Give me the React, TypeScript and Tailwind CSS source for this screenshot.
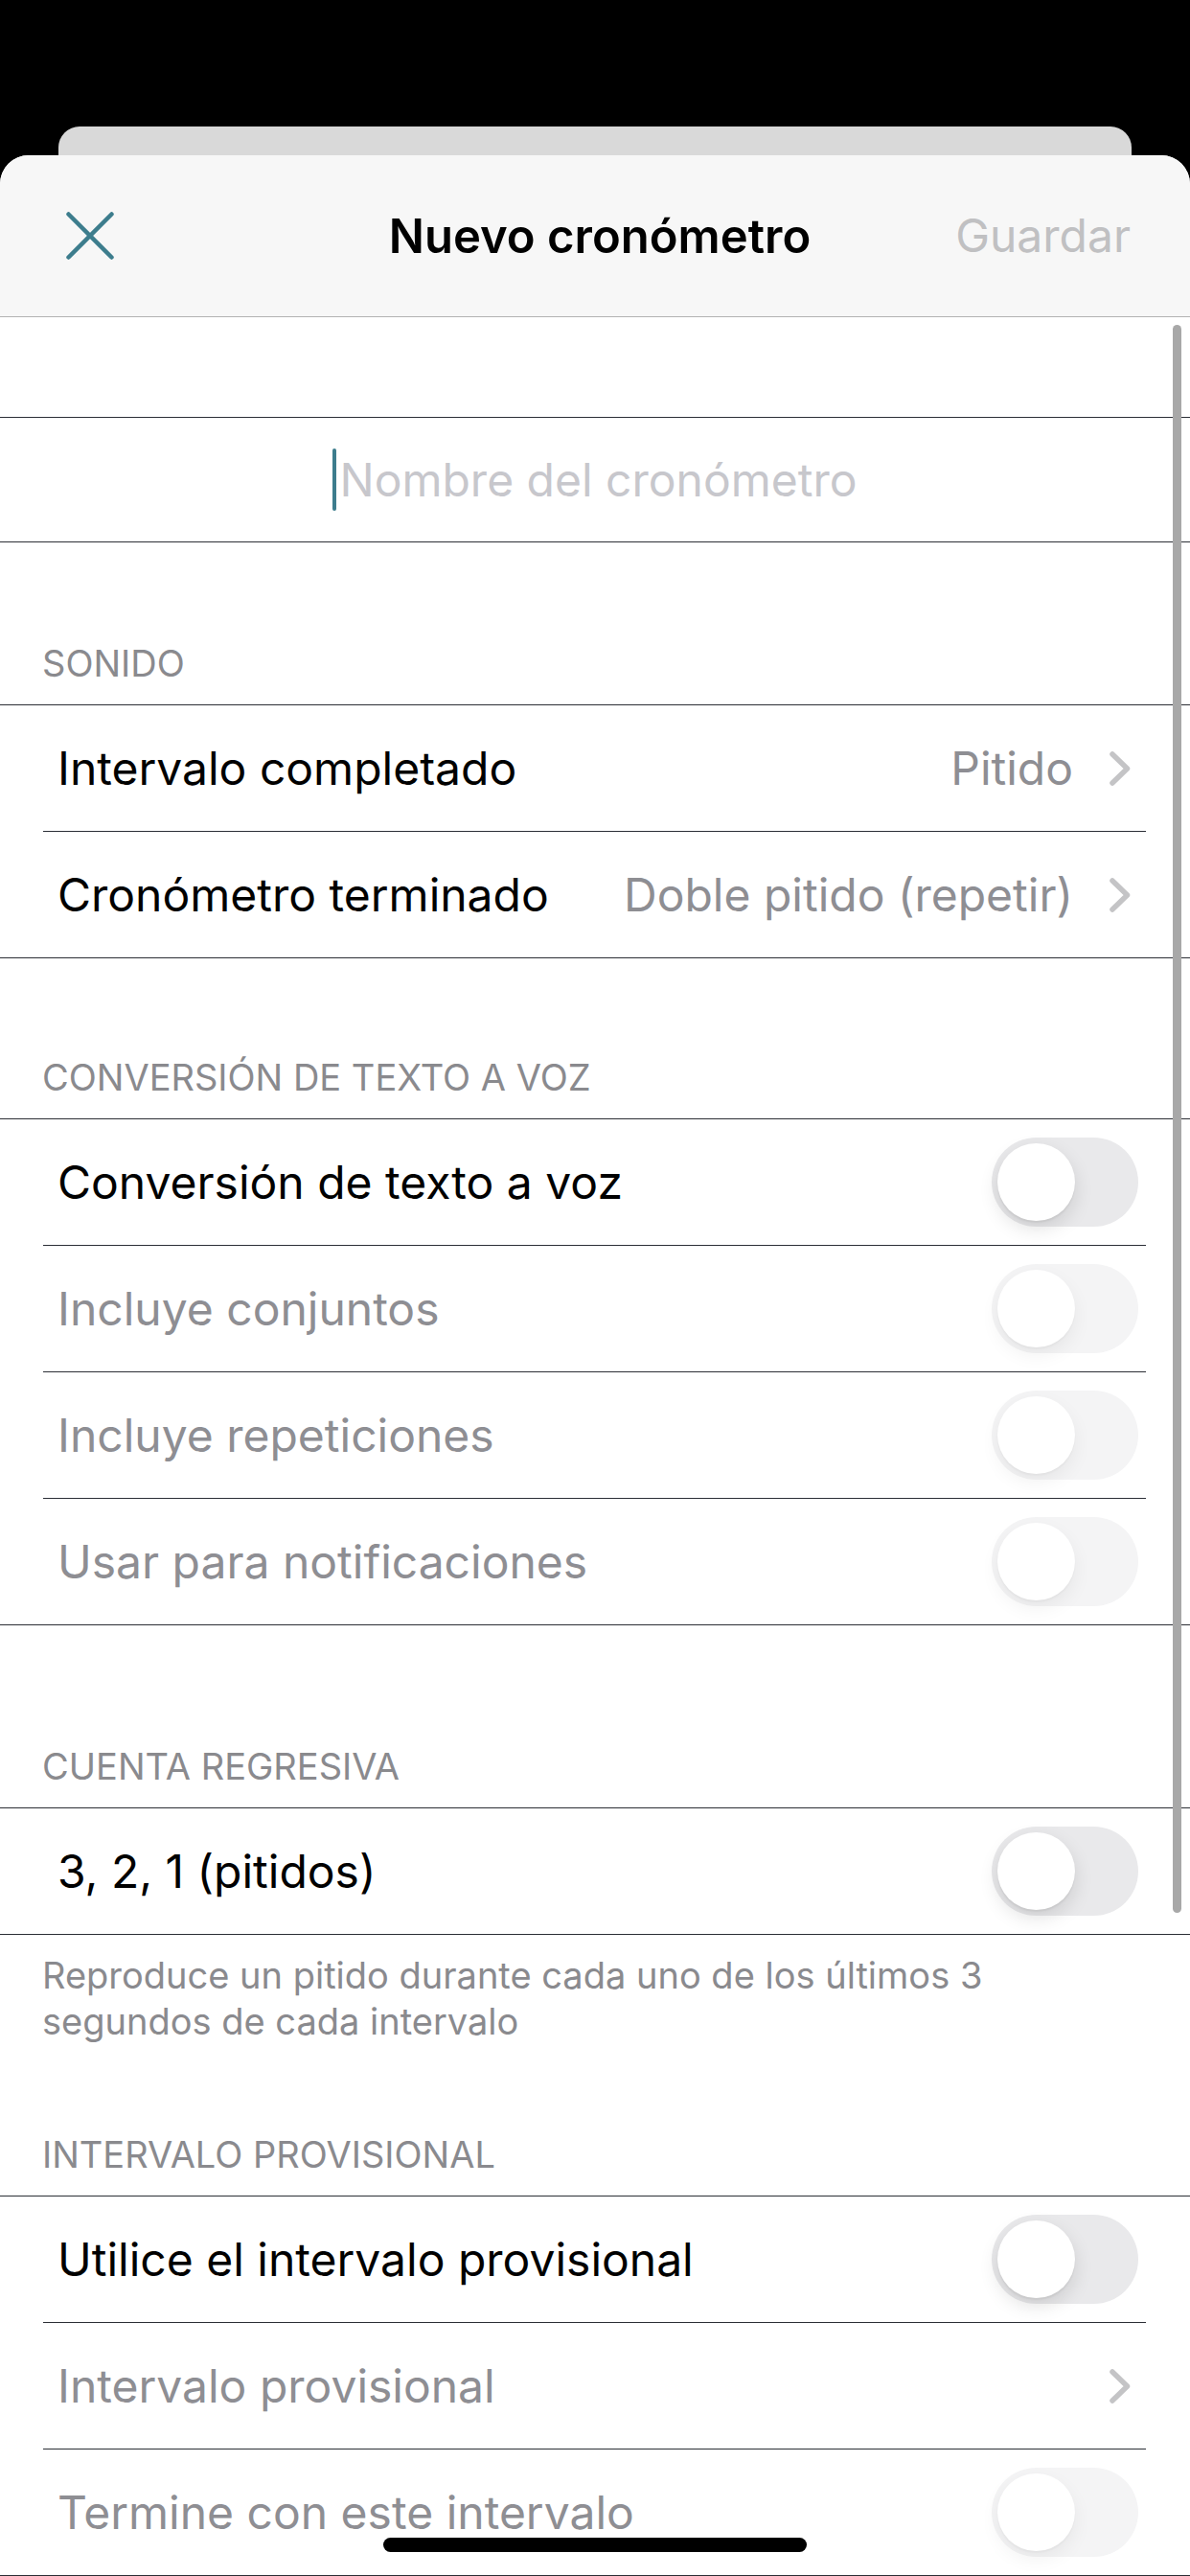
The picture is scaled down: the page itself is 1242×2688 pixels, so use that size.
import type { ReactNode } from 'react';

type Row =
  | { label: string; kind: 'value'; value?: string; disabled?: boolean }
  | { label: string; kind: 'toggle'; disabled?: boolean };

const soundRows: Row[] = [
  { label: 'Intervalo completado', kind: 'value', value: 'Pitido' },
  { label: 'Cronómetro terminado', kind: 'value', value: 'Doble pitido (repetir)' },
];

const speechRows: Row[] = [
  { label: 'Conversión de texto a voz', kind: 'toggle' },
  { label: 'Incluye conjuntos', kind: 'toggle', disabled: true },
  { label: 'Incluye repeticiones', kind: 'toggle', disabled: true },
  { label: 'Usar para notificaciones', kind: 'toggle', disabled: true },
];

const countdownRows: Row[] = [{ label: '3, 2, 1 (pitidos)', kind: 'toggle' }];

const interimRows: Row[] = [
  { label: 'Utilice el intervalo provisional', kind: 'toggle' },
  { label: 'Intervalo provisional', kind: 'value', disabled: true },
  { label: 'Termine con este intervalo', kind: 'toggle', disabled: true },
];

function Divider({ inset = false }: { inset?: boolean }) {
  return inset ? (
    <div className="flex h-px">
      <div className="ml-[45px] w-[1151px] bg-[#2c2f36]" />
    </div>
  ) : (
    <div className="h-px bg-[#2c2f36]" />
  );
}

function Chevron() {
  return (
    <svg width="22" height="36" viewBox="0 0 22 36" fill="none">
      <path
        d="M3 3 L18.5 18 L3 33"
        stroke="#c4c4c6"
        strokeWidth="5.5"
        strokeLinecap="round"
        strokeLinejoin="round"
      />
    </svg>
  );
}

function Toggle({ disabled }: { disabled?: boolean }) {
  return (
    <div
      className={`flex h-[93px] w-[153px] items-center rounded-full pl-[6px] ${
        disabled ? 'bg-[#f4f4f5]' : 'bg-[#e9e9eb]'
      }`}
    >
      <div
        className={`h-[81px] w-[81px] rounded-full bg-white ${
          disabled
            ? 'shadow-[0_8px_20px_rgba(0,0,0,0.06),0_2px_2px_rgba(0,0,0,0.03)]'
            : 'shadow-[0_8px_20px_rgba(0,0,0,0.12),0_2px_2px_rgba(0,0,0,0.06)]'
        }`}
      />
    </div>
  );
}

function SectionHeader({ title, height }: { title: string; height: string }) {
  return (
    <div className={`flex items-end px-[44px] pb-[24px] ${height}`}>
      <span className="text-[38px] leading-none text-[#8a8a8e]">{title}</span>
    </div>
  );
}

function Group({ rows }: { rows: Row[] }) {
  return (
    <div>
      <Divider />
      {rows.map((row, i) => (
        <div key={row.label}>
          <div className="flex h-[131px] items-center justify-between pl-[60px]">
            <span
              className={`text-[48px] leading-none ${
                row.disabled ? 'text-[#8e8e93]' : 'text-black'
              }`}
            >
              {row.label}
            </span>
            {row.kind === 'toggle' ? (
              <div className="pr-[54px]">
                <Toggle disabled={row.disabled} />
              </div>
            ) : (
              <div className="flex items-center gap-[38px] pr-[62px]">
                {row.value && (
                  <span className="text-[48px] leading-none text-[#8e8e93]">{row.value}</span>
                )}
                <Chevron />
              </div>
            )}
          </div>
          <Divider inset={i < rows.length - 1} />
        </div>
      ))}
    </div>
  );
}

function Overlay({ children }: { children: ReactNode }) {
  return <div className="pointer-events-none absolute inset-0">{children}</div>;
}

export default function App() {
  return (
    <div className="relative h-[2688px] w-[1242px] overflow-hidden bg-black pt-[132px] font-[Inter,'Noto_Sans',sans-serif]">
      {/* card behind the sheet */}
      <div className="mx-[61px] h-[30px] rounded-t-[22px] bg-[#d9d9d9]" />

      <div className="h-[2526px] overflow-hidden rounded-t-[30px] bg-white">
        <div className="grid h-[168px] grid-cols-[1fr_auto_1fr] items-center bg-[#f7f7f7] pl-[69px] pr-[62px]">
          <svg width="50" height="50" viewBox="0 0 50 50" fill="none">
            <path
              d="M2.5 2.5 L47.5 47.5 M47.5 2.5 L2.5 47.5"
              stroke="#3d7d8d"
              strokeWidth="4.5"
              strokeLinecap="round"
            />
          </svg>
          <span className="ml-[3px] text-[49px] font-semibold leading-none text-black">
            Nuevo cronómetro
          </span>
          <span className="justify-self-end text-[48px] leading-none text-[#c0c0c2]">Guardar</span>
        </div>
        <div className="h-px bg-[#b2b2b2]" />

        <div className="h-[104px]" />
        <Divider />
        <div className="flex h-[129px] items-center justify-center">
          <div className="mr-[3px] h-[65px] w-[4px] rounded-full bg-[#3d7d8d]" />
          <span className="text-[48px] leading-none text-[#c7c7cc]">Nombre del cronómetro</span>
        </div>

        <div className="h-px bg-[#2c2f36]" />
        <SectionHeader title="SONIDO" height="h-[169px]" />
        <Group rows={soundRows} />

        <SectionHeader title="CONVERSIÓN DE TEXTO A VOZ" height="h-[167px]" />
        <Group rows={speechRows} />

        <SectionHeader title="CUENTA REGRESIVA" height="h-[190px]" />
        <Group rows={countdownRows} />
        <div className="h-[115px] px-[44px] pt-[18px]">
          <p className="text-[38px] leading-[48px] text-[#8a8a8e]">
            Reproduce un pitido durante cada uno de los últimos 3
            <br />
            segundos de cada intervalo
          </p>
        </div>

        <SectionHeader title="INTERVALO PROVISIONAL" height="h-[157px]" />
        <Group rows={interimRows} />
      </div>

      <Overlay>
        {/* scroll indicator */}
        <div className="absolute left-[1224px] top-[339px] h-[1657px] w-[9px] rounded-full bg-[#a8a8a8]" />
        {/* home indicator */}
        <div className="absolute left-[400px] top-[2648px] h-[15px] w-[442px] rounded-full bg-black" />
      </Overlay>
    </div>
  );
}
